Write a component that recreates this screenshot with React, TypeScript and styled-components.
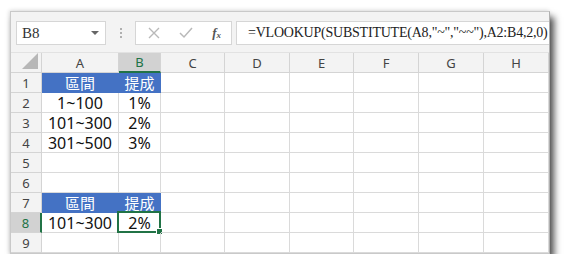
import React from "react";
import styled, { createGlobalStyle, css } from "styled-components";

const GlobalStyle = createGlobalStyle`
  html, body {
    margin: 0;
    padding: 0;
    background: #ffffff;
  }
`;

const colWidths = [77, 42, 64, 65, 64, 65, 65, 65];
const colNames = ["A", "B", "C", "D", "E", "F", "G", "H"];

type CellData = { text: string; header?: boolean };
const cellMap: Record<string, CellData> = {
  A1: { text: "區間", header: true },
  B1: { text: "提成", header: true },
  A2: { text: "1~100" },
  B2: { text: "1%" },
  A3: { text: "101~300" },
  B3: { text: "2%" },
  A4: { text: "301~500" },
  B4: { text: "3%" },
  A7: { text: "區間", header: true },
  B7: { text: "提成", header: true },
  A8: { text: "101~300" },
  B8: { text: "2%" },
};

const activeCol = "B";
const activeRow = 8;

export default function App() {
  const rows = [1, 2, 3, 4, 5, 6, 7, 8, 9];

  return (
    <>
      <GlobalStyle />
      <Page>
        <Window>
          <Toolbar>
            <NameBox>
              <span>B8</span>
              <Caret />
            </NameBox>
            <Grip>
              <i />
              <i />
              <i />
            </Grip>
            <Buttons>
              <svg width="12" height="12" viewBox="0 0 12 12">
                <path d="M1 1 L11 11 M11 1 L1 11" stroke="#b9b9b9" strokeWidth="1.4" />
              </svg>
              <svg width="14" height="12" viewBox="0 0 14 12">
                <path d="M1 6 L5 10 L13 1" stroke="#b9b9b9" strokeWidth="1.5" fill="none" />
              </svg>
              <Fx>
                f<sub>x</sub>
              </Fx>
            </Buttons>
            <FormulaBox>=VLOOKUP(SUBSTITUTE(A8,"~","~~"),A2:B4,2,0)</FormulaBox>
          </Toolbar>

          <Sheet>
            <Corner>
              <svg width="16" height="16" viewBox="0 0 16 16">
                <path d="M16 0 L16 16 L0 16 Z" fill="#b7b7b7" />
              </svg>
            </Corner>
            {colNames.map((c) => (
              <ColHead key={c} $active={c === activeCol}>
                {c}
              </ColHead>
            ))}
            {rows.map((r) => (
              <React.Fragment key={r}>
                <RowHead $active={r === activeRow}>{r}</RowHead>
                {colNames.map((c) => {
                  const data = cellMap[`${c}${r}`];
                  const selected = c === activeCol && r === activeRow;
                  return (
                    <Cell key={c} $fill={!!data?.header}>
                      {data?.text}
                      {selected && (
                        <Selection>
                          <Handle />
                        </Selection>
                      )}
                    </Cell>
                  );
                })}
              </React.Fragment>
            ))}
          </Sheet>
        </Window>
      </Page>
    </>
  );
}

const Page = styled.div`
  padding: 11px 0 0 10px;
`;

const Window = styled.div`
  width: 538px;
  border: 1px solid #c9c9c9;
  border-right-color: #b0b0b0;
  background: #f3f3f3;
  box-shadow: 4px 6px 7px rgba(0, 0, 0, 0.7), -1px -1px 4px rgba(0, 0, 0, 0.12);
`;

const Toolbar = styled.div`
  height: 41px;
  display: flex;
  align-items: flex-start;
  padding: 9px 0 0 5px;
  box-sizing: border-box;
  border-bottom: 1px solid #e2e2e2;
`;

const boxStyle = css`
  height: 24px;
  box-sizing: border-box;
  background: #ffffff;
  border: 1px solid #d6d6d6;
  display: flex;
  align-items: center;
`;

const NameBox = styled.div`
  ${boxStyle};
  width: 90px;
  padding: 0 6px 0 5px;
  justify-content: space-between;
  font-family: "Liberation Serif", serif;
  font-size: 15px;
  color: #333;
`;

const Caret = styled.span`
  width: 0;
  height: 0;
  border-left: 4px solid transparent;
  border-right: 4px solid transparent;
  border-top: 4px solid #666;
`;

const Grip = styled.div`
  width: 29px;
  height: 24px;
  display: flex;
  flex-direction: column;
  align-items: center;
  justify-content: center;
  gap: 2px;
  i {
    width: 2px;
    height: 2px;
    background: #b0b0b0;
  }
`;

const Buttons = styled.div`
  ${boxStyle};
  width: 97px;
  padding: 0 10px 0 12px;
  justify-content: space-between;
`;

const Fx = styled.span`
  font-family: "Liberation Serif", serif;
  font-style: italic;
  font-weight: bold;
  font-size: 13px;
  color: #555;
  sub {
    font-size: 9px;
    vertical-align: -1px;
  }
`;

const FormulaBox = styled.div`
  ${boxStyle};
  flex: 1;
  margin-left: 4px;
  padding-left: 11px;
  border-right: none;
  white-space: nowrap;
  overflow: hidden;
  font-family: "Liberation Serif", serif;
  font-size: 14px;
  letter-spacing: -0.22px;
  color: #222;
`;

const Sheet = styled.div`
  display: grid;
  grid-template-columns: 31px ${colWidths.map((w) => `${w}px`).join(" ")};
  grid-auto-rows: 20px;
  background: #ffffff;
`;

const headStyle = css`
  box-sizing: border-box;
  background: #f3f3f3;
  display: flex;
  align-items: center;
  justify-content: center;
  font-family: "Noto Sans", sans-serif;
  font-size: 13px;
  color: #444;
`;

const Corner = styled.div`
  ${headStyle};
  justify-content: flex-end;
  align-items: flex-end;
  padding: 0 3px 3px 0;
  border-right: 1px solid #d4d4d4;
  border-bottom: 1px solid #d4d4d4;
`;

const ColHead = styled.div<{ $active: boolean }>`
  ${headStyle};
  border-right: 1px solid #d4d4d4;
  border-bottom: 1px solid #d4d4d4;
  ${(p) =>
    p.$active &&
    css`
      background: #d2d2d2;
      color: #217346;
      border-bottom: 2px solid #217346;
    `}
`;

const RowHead = styled.div<{ $active: boolean }>`
  ${headStyle};
  border-right: 1px solid #d4d4d4;
  border-bottom: 1px solid #d4d4d4;
  ${(p) =>
    p.$active &&
    css`
      background: #d2d2d2;
      color: #217346;
      border-right: 2px solid #217346;
    `}
`;

const Cell = styled.div<{ $fill: boolean }>`
  position: relative;
  box-sizing: border-box;
  border-right: 1px solid #dadada;
  border-bottom: 1px solid #dadada;
  display: flex;
  align-items: center;
  justify-content: center;
  font-family: "Noto Sans", "Noto Sans CJK TC", sans-serif;
  font-size: 16px;
  color: #111;
  white-space: nowrap;
  ${(p) =>
    p.$fill &&
    css`
      font-size: 15px;
      background: #4472c4;
      color: #ffffff;
      border-right-color: #4472c4;
      border-bottom-color: #4472c4;
    `}
`;

const Selection = styled.div`
  position: absolute;
  left: -2px;
  top: -2px;
  right: -1px;
  bottom: -1px;
  border: 2px solid #217346;
  pointer-events: none;
`;

const Handle = styled.div`
  position: absolute;
  right: -4px;
  bottom: -4px;
  width: 5px;
  height: 5px;
  background: #217346;
  border: 1px solid #ffffff;
`;
